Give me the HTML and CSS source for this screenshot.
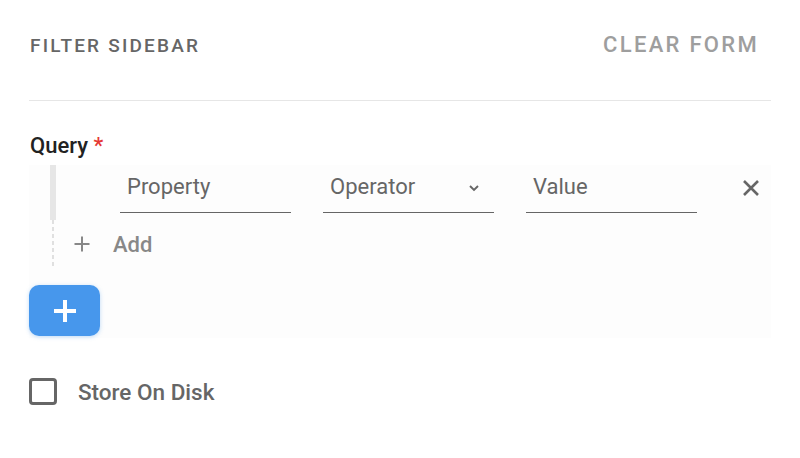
FILE: index.html
```html
<!DOCTYPE html>
<html>
<head>
<meta charset="utf-8">
<link rel="stylesheet" href="styles.css">
</head>
<body>
<div class="sidebar">
  <div class="header">
    <span class="title">FILTER SIDEBAR</span>
    <span class="clear">CLEAR FORM</span>
  </div>
  <div class="label">Query <span class="req">*</span></div>
  <div class="panel">
    <div class="rule">
      <div class="bar"></div>
      <div class="fields">
        <div class="field">Property</div>
        <div class="field select">Operator
          <svg class="chev" width="12" height="8" viewBox="0 0 12 8"><path d="M2 2 L6 6 L10 2" fill="none" stroke="#666" stroke-width="1.9"/></svg>
        </div>
        <div class="field">Value</div>
      </div>
      <svg class="close" width="18" height="18" viewBox="0 0 18 18"><path d="M2 2 L16 16 M16 2 L2 16" stroke="#666" stroke-width="2.6" stroke-linecap="butt"/></svg>
    </div>
    <div class="addrow">
      <div class="dash"></div>
      <svg class="addicon" width="16" height="16" viewBox="0 0 16 16"><path d="M8 0.5 V15.5 M0.5 8 H15.5" stroke="#888" stroke-width="2"/></svg>
      <span class="addtext">Add</span>
    </div>
    <button class="fab"><svg width="24" height="24" viewBox="0 0 24 24"><path d="M12 1 V23 M1 12 H23" stroke="#fff" stroke-width="4"/></svg></button>
  </div>
  <label class="check">
    <span class="box"></span>
    <span class="checktext">Store On Disk</span>
  </label>
</div>
</body>
</html>
```

FILE: styles.css
```css
html, body {
  margin: 0;
  padding: 0;
  background: #fff;
}
body {
  font-family: Roboto, "Liberation Sans", sans-serif;
}
.sidebar {
  width: 742px;
  margin-left: 29px;
}
.header {
  display: flex;
  justify-content: space-between;
  align-items: center;
  height: 90px;
  padding-bottom: 10px;
  border-bottom: 1px solid #e6e6e6;
}
.title {
  font-size: 19px;
  line-height: 1;
  font-weight: 500;
  letter-spacing: 2.2px;
  color: #666;
  margin-left: 1px;
}
.clear {
  font-size: 22px;
  line-height: 1;
  font-weight: 500;
  letter-spacing: 2.3px;
  color: #9e9e9e;
  margin-right: 12px;
}
.label {
  margin-top: 34px;
  font-size: 22px;
  line-height: 22px;
  font-weight: 500;
  color: #222;
  margin-left: 1px;
}
.req {
  color: #e53935;
}
.panel {
  margin-top: 8px;
  background: #fdfdfd;
  padding-bottom: 2px;
}
.rule {
  display: flex;
  align-items: flex-start;
  height: 55px;
  margin-left: 21px;
}
.bar {
  width: 6px;
  height: 55px;
  background: #e6e6e6;
}
.fields {
  display: flex;
  gap: 32px;
  margin-left: 64px;
  padding-top: 11px;
}
.field {
  width: 164px;
  padding-left: 7px;
  height: 22px;
  padding-bottom: 14px;
  border-bottom: 1px solid #666;
  font-size: 22px;
  line-height: 22px;
  color: #666;
  position: relative;
}
.chev {
  position: absolute;
  right: 14px;
  top: 8px;
}
.close {
  margin-left: 45px;
  margin-top: 14px;
}
.addrow {
  display: flex;
  align-items: center;
  height: 48px;
}
.dash {
  width: 2px;
  height: 48px;
  margin-left: 23px;
  background: repeating-linear-gradient(to bottom, #e0e0e0 0 4px, transparent 4px 7px);
}
.addicon {
  margin-left: 20px;
}
.addtext {
  margin-left: 23px;
  font-size: 22px;
  font-weight: 500;
  color: #888;
}
.fab {
  display: flex;
  align-items: center;
  justify-content: center;
  margin-top: 17px;
  width: 71px;
  height: 51px;
  border: none;
  border-radius: 10px;
  background: #4797ec;
  box-shadow: 0 1px 4px rgba(71, 151, 236, 0.35);
  padding: 0;
}
.check {
  display: flex;
  align-items: center;
  margin-top: 40px;
}
.box {
  width: 22px;
  height: 21px;
  border: 3px solid #666;
  border-radius: 4px;
}
.checktext {
  margin-left: 21px;
  font-size: 22.5px;
  font-weight: 500;
  color: #666;
}
```
